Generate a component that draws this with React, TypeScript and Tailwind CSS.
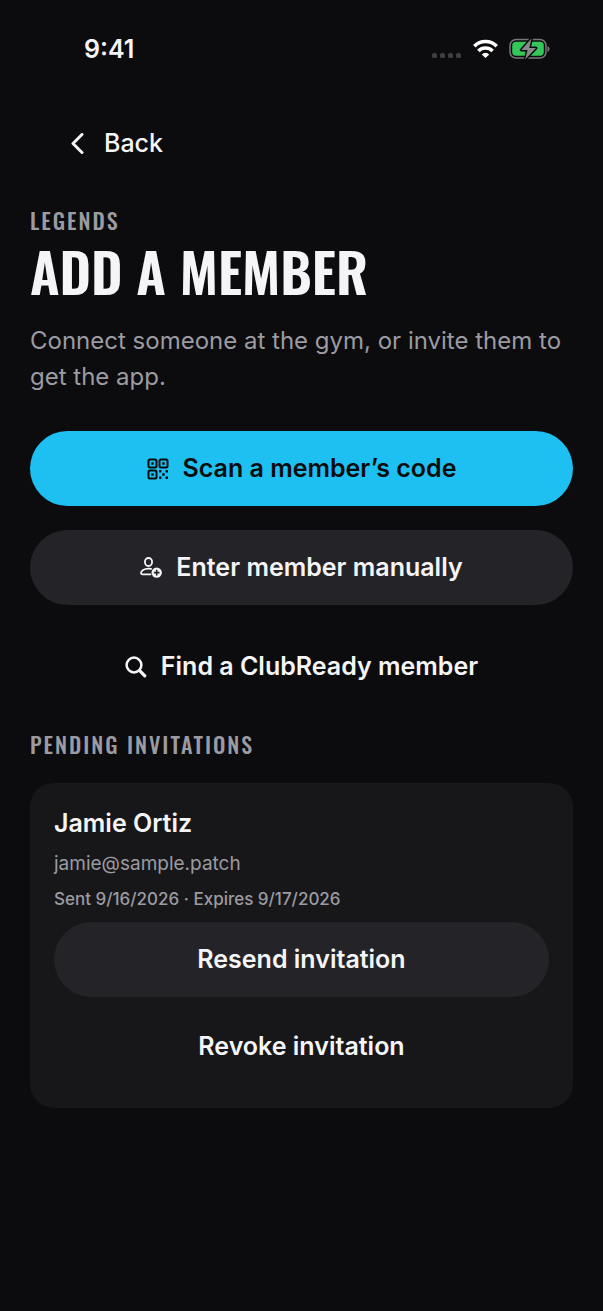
import type { ReactNode } from 'react';
import clsx from 'clsx';

/**
 * Add Member Screen
 * Entry points for connecting a member, plus the invitations still pending
 */

const invitations = [
  { name: 'Jamie Ortiz', email: 'jamie@sample.patch', sent: '9/16/2026', expires: '9/17/2026' },
];

function StatusBar() {
  return (
    <div className="flex h-[98px] items-center justify-between pl-[84px] pr-[53px]">
      <span className="text-[25px] font-semibold leading-8">9:41</span>
      <div className="flex items-center gap-[11px]">
        <svg width="30" height="22" viewBox="0 0 30 22" fill="#3f3f42" aria-hidden="true">
          <rect x="0" y="15" width="5" height="5" rx="1.5" />
          <rect x="8" y="15" width="5" height="5" rx="1.5" />
          <rect x="16" y="15" width="5" height="5" rx="1.5" />
          <rect x="24" y="15" width="5" height="5" rx="1.5" />
        </svg>
        <svg width="25" height="20" viewBox="0 0 25 20" fill="none" stroke="#fff" strokeWidth="3.6" aria-hidden="true">
          <path d="M1.3 7.2a15.8 15.8 0 0 1 22.4 0" />
          <path d="M5.4 11.9a10 10 0 0 1 14.2 0" />
          <path d="M12.5 19.1 8.8 15.4a5.2 5.2 0 0 1 7.4 0Z" fill="#fff" stroke="none" />
        </svg>
        <svg width="41" height="24" viewBox="0 0 41 24" aria-hidden="true">
          <rect x="1" y="2.5" width="36" height="18.5" rx="6" fill="none" stroke="#77777a" strokeWidth="1.5" />
          <rect x="3.2" y="4.7" width="31.6" height="14.1" rx="4" fill="#34c759" />
          <path d="M38.5 9v6c1.2-.5 2-1.6 2-3s-.8-2.5-2-3Z" fill="#77777a" />
          <path
            d="M22.5 1.5 12.3 13h6.2l-2.3 9.5L27 11h-6.7Z"
            fill="#8a8a8d"
            stroke="#0c0c0e"
            strokeWidth="3"
            strokeLinejoin="round"
            paintOrder="stroke"
          />
        </svg>
      </div>
    </div>
  );
}

function QrIcon() {
  return (
    <svg width="22" height="22" viewBox="0 0 22 22" fill="currentColor" aria-hidden="true">
      <g fill="none" stroke="currentColor" strokeWidth="2">
        <rect x="1.5" y="1.5" width="8" height="8" rx="1.5" />
        <rect x="12.5" y="1.5" width="8" height="8" rx="1.5" />
        <rect x="1.5" y="12.5" width="8" height="8" rx="1.5" />
      </g>
      <path d="M4.3 4.3h2.4v2.4H4.3zM15.3 4.3h2.4v2.4h-2.4zM4.3 15.3h2.4v2.4H4.3z" />
      <path d="M12 12h2.4v2.4H12zM18.6 12H21v2.4h-2.4zM15.3 15.3h2.4v2.4h-2.4zM12 18.6h2.4V21H12zM18.6 18.6H21V21h-2.4z" />
    </svg>
  );
}

function PersonAddIcon() {
  return (
    <svg width="22" height="22" viewBox="1 1 22 22" fill="none" stroke="currentColor" strokeWidth="1.8" aria-hidden="true">
      <ellipse cx="9.5" cy="6" rx="3.6" ry="4" />
      <path d="M11.5 18.3H3.3c-.9 0-1.3-.5-1.3-1.2 0-2.3 3.1-4.5 7.5-4.5 1 0 1.9.1 2.7.3" strokeLinecap="round" />
      <circle cx="17.7" cy="16.6" r="5.2" fill="currentColor" stroke="none" />
      <path d="M17.7 13.8v5.6M14.9 16.6h5.6" className="stroke-[#242428]" strokeWidth="1.6" />
    </svg>
  );
}

function SearchIcon() {
  return (
    <svg width="22" height="22" viewBox="0 0 22 22" fill="none" stroke="currentColor" strokeLinecap="round" aria-hidden="true">
      <circle cx="9" cy="9" r="7.4" strokeWidth="2.5" />
      <path d="m14.9 14.9 4.9 4.9" strokeWidth="3.2" />
    </svg>
  );
}

type ActionButtonProps = {
  variant: 'primary' | 'secondary' | 'plain';
  icon?: ReactNode;
  children: ReactNode;
};

function ActionButton({ variant, icon, children }: ActionButtonProps) {
  return (
    <button
      type="button"
      className={clsx(
        'flex h-[75px] w-full items-center justify-center gap-3.5 rounded-full text-[25px] font-semibold',
        variant === 'primary' && 'bg-[#1dc0f1] text-[#0c0c0e]',
        variant === 'secondary' && 'bg-[#242428]',
      )}
    >
      {icon}
      {children}
    </button>
  );
}

export default function App() {
  return (
    <div className="min-h-screen bg-[#0c0c0e] font-['Inter',sans-serif] text-[#f5f5f7]">
      <StatusBar />

      <main className="px-[30px] pb-10">
        <button type="button" className="ml-10 mt-[22px] flex h-12 items-center gap-5 text-[25px] font-medium">
          <svg width="14" height="22" viewBox="0 0 14 22" fill="none" stroke="currentColor" strokeWidth="3" aria-hidden="true">
            <path d="M12 1.5 3 10.5l9 9" strokeLinecap="round" strokeLinejoin="round" />
          </svg>
          Back
        </button>

        <p className="mt-[38px] font-['Oswald','Liberation_Sans_Narrow',sans-serif] text-[22px] font-medium uppercase leading-7 tracking-[2px] text-[#9b9ba1]">
          Legends
        </p>
        <h1 className="mt-2 font-['Oswald','Liberation_Sans_Narrow',sans-serif] text-[55px] font-semibold uppercase leading-14">
          Add a member
        </h1>
        <p className="mt-[25px] text-[24px] leading-9 text-[#9b9ba1]">
          Connect someone at the gym, or invite them to get the app.
        </p>

        {/* Actions */}
        <div className="mt-9 flex flex-col gap-6">
          <ActionButton variant="primary" icon={<QrIcon />}>
            Scan a member’s code
          </ActionButton>
          <ActionButton variant="secondary" icon={<PersonAddIcon />}>
            Enter member manually
          </ActionButton>
          <ActionButton variant="plain" icon={<SearchIcon />}>
            Find a ClubReady member
          </ActionButton>
        </div>

        {/* Pending invitations */}
        <h2 className="mt-[26px] font-['Oswald','Liberation_Sans_Narrow',sans-serif] text-[22px] font-medium uppercase leading-7 tracking-[2px] text-[#9b9ba1]">
          Pending invitations
        </h2>
        <ul className="mt-[25px] space-y-4">
          {invitations.map((invite) => (
            <li key={invite.email} className="rounded-3xl bg-[#17171a] p-6">
              <h3 className="text-[25px] font-semibold leading-8">{invite.name}</h3>
              <p className="mt-[11px] text-[19px] leading-7 text-[#9b9ba1]">{invite.email}</p>
              <p className="mt-[9px] text-[17px] font-medium leading-6 text-[#9b9ba1]">
                Sent {invite.sent} · Expires {invite.expires}
              </p>
              <div className="mt-[11px] flex flex-col gap-3">
                <ActionButton variant="secondary">Resend invitation</ActionButton>
                <ActionButton variant="plain">Revoke invitation</ActionButton>
              </div>
            </li>
          ))}
        </ul>
      </main>
    </div>
  );
}
